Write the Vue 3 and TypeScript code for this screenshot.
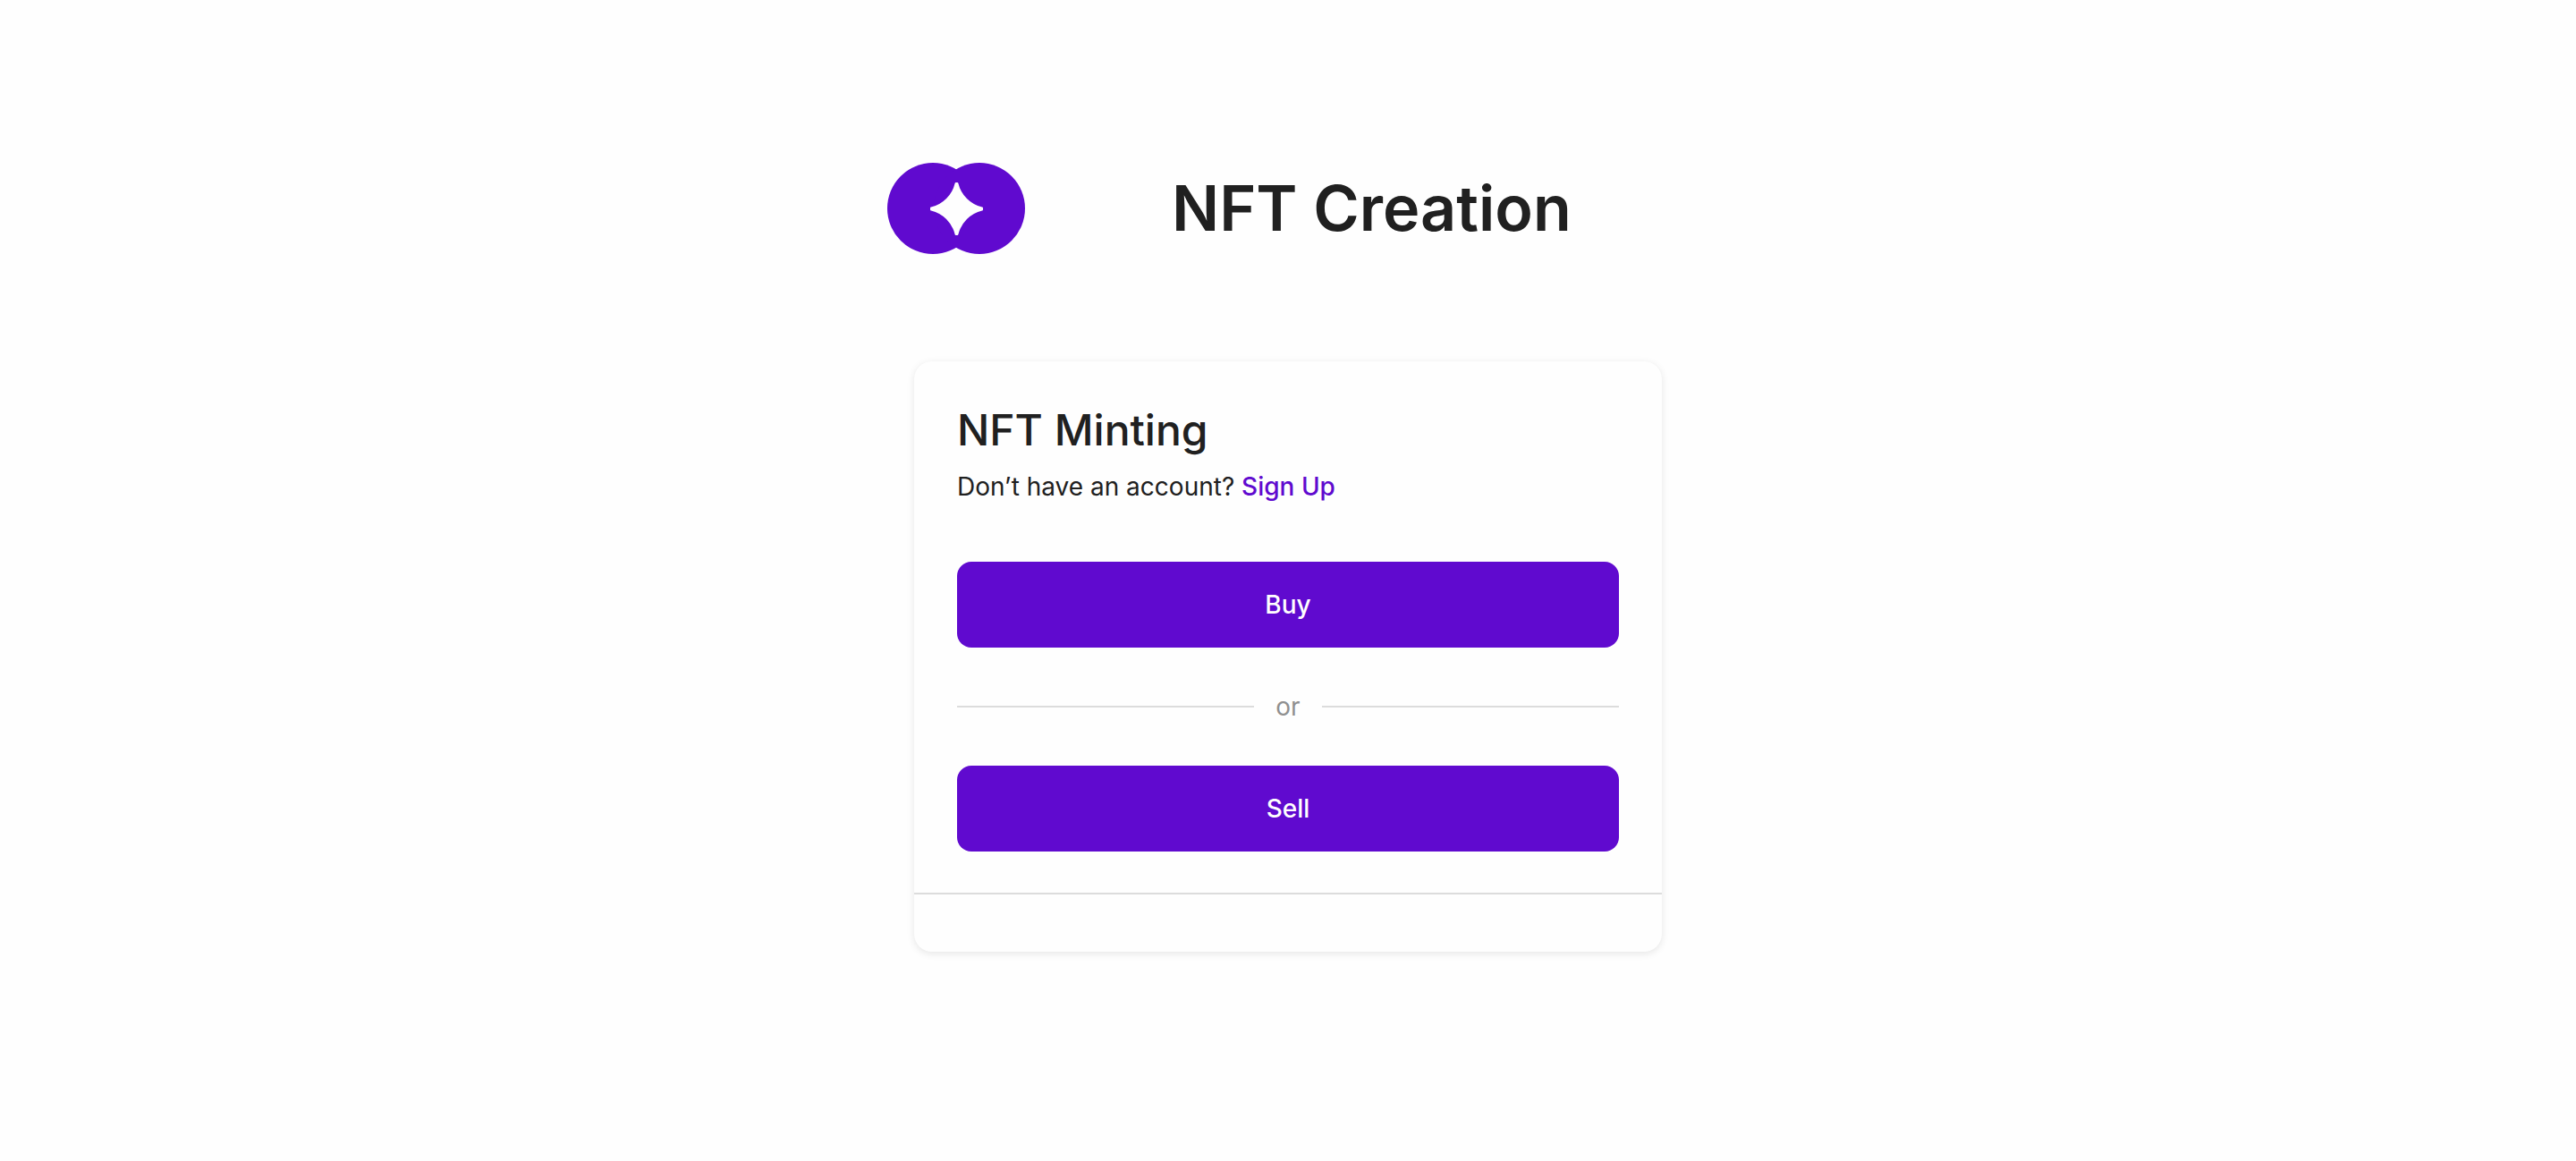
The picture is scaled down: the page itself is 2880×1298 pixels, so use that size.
<script setup lang="ts">
const title = 'NFT Creation'
const heading = 'NFT Minting'
</script>

<template>
  <main class="page">
    <header class="masthead">
      <svg class="logo" viewBox="0 0 154 102" role="img" aria-label="Logo">
        <circle cx="51" cy="51" r="51" />
        <circle cx="103" cy="51" r="51" />
        <path
          class="spark"
          d="M76.6 22H78.400Q79.200 22 79.400 23A36 36 0 0 0 106 49.600Q107 49.800 107 50.600V52.400Q107 53.200 106 53.400A36 36 0 0 0 79.400 80Q79.200 81 78.400 81H76.600Q75.800 81 75.600 80A36 36 0 0 0 49 53.400Q48 53.200 48 52.400V50.600Q48 49.800 49 49.600A36 36 0 0 0 75.600 23Q75.800 22 76.600 22Z"
        />
      </svg>
      <h1 class="title">{{ title }}</h1>
    </header>

    <section class="card">
      <div class="body">
        <h2 class="heading">{{ heading }}</h2>
        <p class="note">Don’t have an account? <a class="link" href="#">Sign Up</a></p>
        <button class="action" type="button">Buy</button>
        <div class="divider">or</div>
        <button class="action" type="button">Sell</button>
      </div>
      <footer class="foot"></footer>
    </section>
  </main>
</template>

<style>
body {
  margin: 0;
  background: #fefefe;
}
</style>

<style scoped>
.page {
  display: flex;
  flex-direction: column;
  align-items: center;
  gap: 120px;
  padding: 182px 24px 120px;
  font-family: Inter, "Liberation Sans", sans-serif;
  font-size: 28px;
  line-height: 40px;
  color: #202020;
}

.masthead {
  display: flex;
  align-items: center;
  gap: 164px;
  width: 100%;
  max-width: 896px;
}

.logo {
  flex: none;
  width: 154px;
  fill: #600acf;
}

.spark {
  fill: #fefefe;
}

.title {
  margin: 0;
  font-size: 70px;
  font-weight: 600;
  line-height: 102px;
  white-space: nowrap;
}

.card {
  width: 100%;
  max-width: 836px;
  border-radius: 20px;
  background: #fefefe;
  box-shadow: 0 2px 8px rgba(0, 0, 0, 0.1);
}

.body {
  display: flex;
  flex-direction: column;
  padding: 48px 48px 46px;
}

.heading {
  margin: 0;
  font-size: 48px;
  font-weight: 500;
  line-height: 58px;
}

.note {
  margin: 14px 0 64px;
}

.link {
  font-weight: 500;
  color: #600acf;
  text-decoration: none;
}

.action {
  height: 96px;
  border: 0;
  border-radius: 16px;
  background: #600acf;
  color: #fefefe;
  font: inherit;
  font-weight: 500;
  cursor: pointer;
}

.divider {
  display: flex;
  align-items: center;
  gap: 24px;
  margin: 46px 0;
  color: #909090;
}

.divider::before,
.divider::after {
  content: "";
  flex: 1;
  height: 2px;
  background: #dcdcdc;
}

.foot {
  height: 64px;
  border-top: 2px solid #dcdcdc;
}
</style>
